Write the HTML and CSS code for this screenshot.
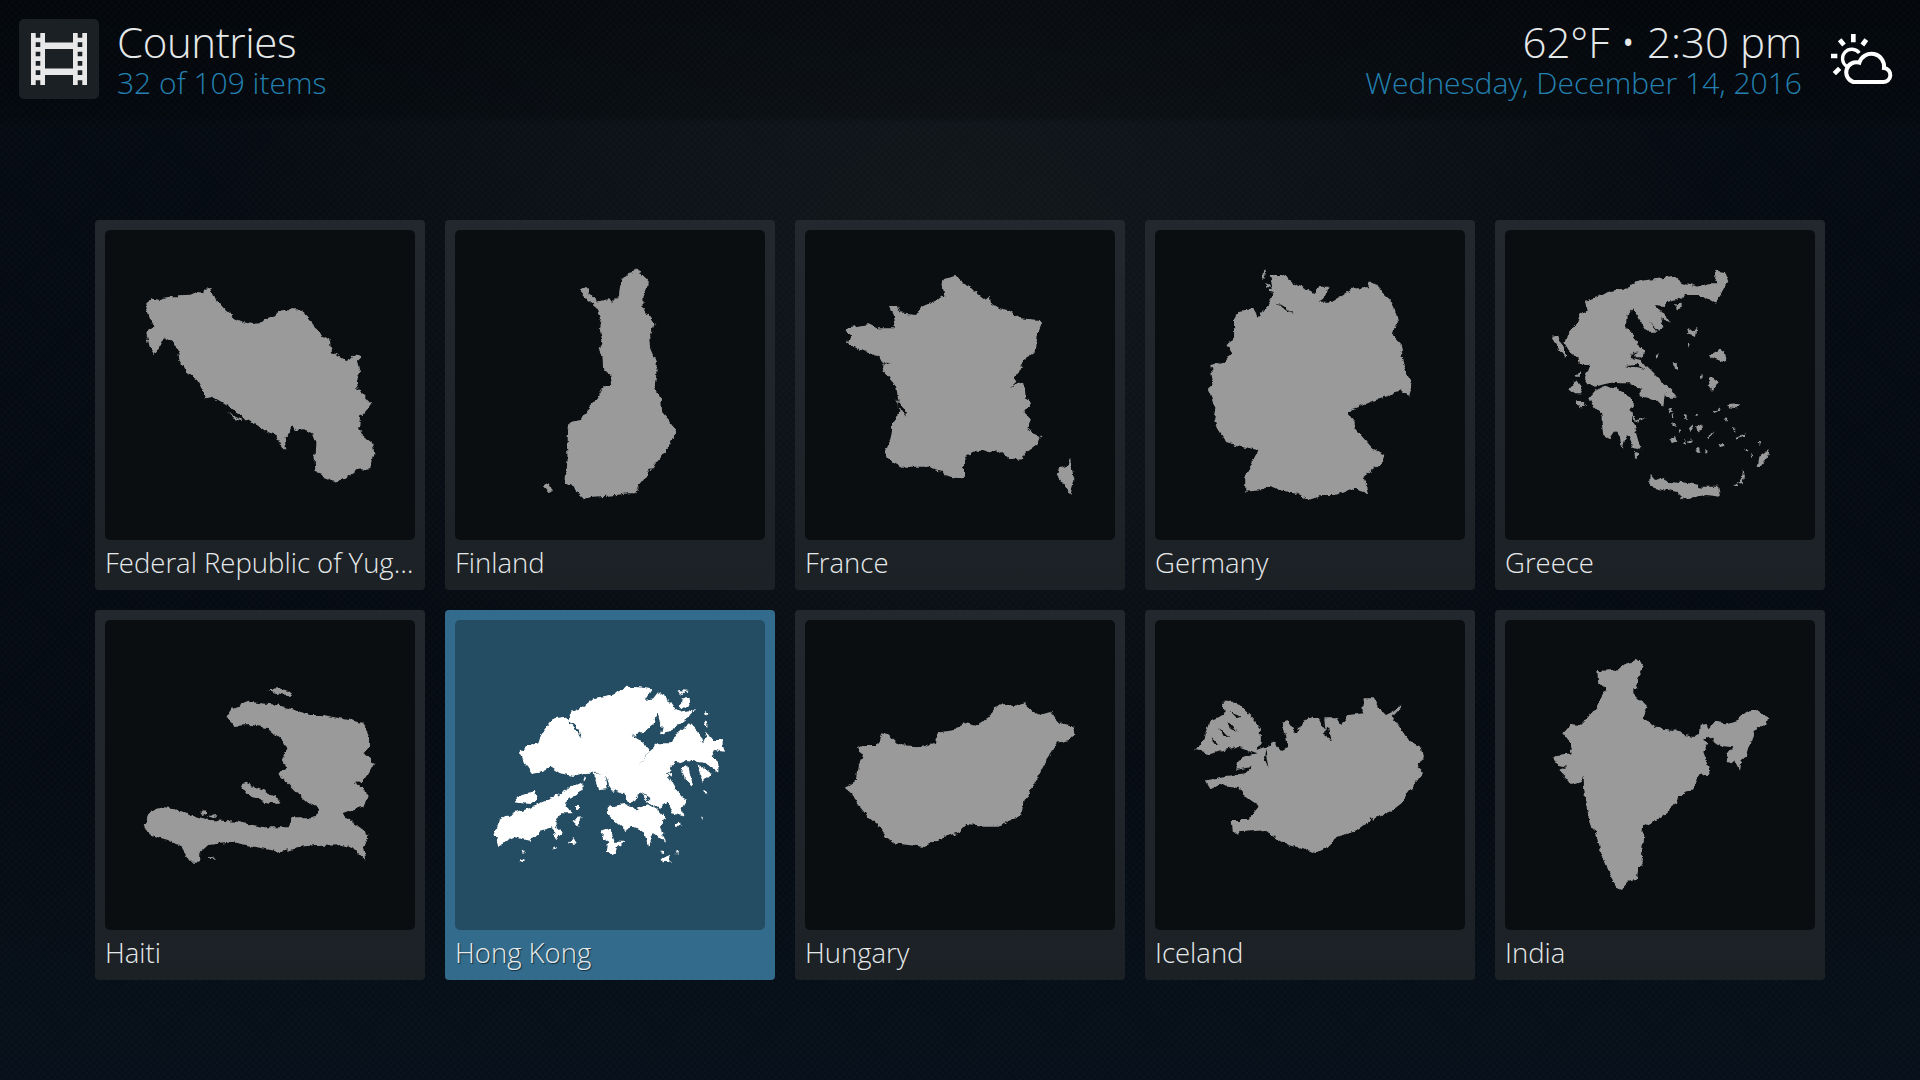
FILE: index.html
```html
<!DOCTYPE html>
<html lang="en">
<head>
    <meta charset="UTF-8">
    <meta name="viewport" content="width=device-width, initial-scale=1.0">
    <title>Countries</title>
    <link rel="stylesheet" href="styles.css">
</head>
<body>
    <!-- roughens the map outlines so they read as coastlines -->
    <svg class="defs" width="0" height="0">
        <filter id="coast" color-interpolation-filters="sRGB">
            <feTurbulence type="fractalNoise" baseFrequency="0.14" numOctaves="3" seed="4" result="noise"/>
            <feDisplacementMap in="SourceGraphic" in2="noise" scale="6" xChannelSelector="R" yChannelSelector="G"/>
        </filter>
    </svg>

    <header class="top-bar">
        <div class="top-left">
            <div class="section-icon">
                <svg class="film-icon" viewBox="0 0 56 52" width="56" height="52">
                    <path fill-rule="evenodd" d="M0 0H14V52H0Z M4.7 0V4.7H9.3V0Z M4.7 9.3V14H9.3V9.3Z M4.7 18.7V23.3H9.3V18.7Z M4.7 28V32.7H9.3V28Z M4.7 37.3V42H9.3V37.3Z M4.7 47.3V52H9.3V47.3Z"/>
                    <path fill-rule="evenodd" d="M42 0H56V52H42Z M46.7 0V4.7H51.3V0Z M46.7 9.3V14H51.3V9.3Z M46.7 18.7V23.3H51.3V18.7Z M46.7 28V32.7H51.3V28Z M46.7 37.3V42H51.3V37.3Z M46.7 47.3V52H51.3V47.3Z"/>
                    <path d="M14 9.5H42V16H14Z M14 35.5H42V42H14Z"/>
                </svg>
            </div>
            <div class="title-block">
                <div class="title">Countries</div>
                <div class="subtitle">32 of 109 items</div>
            </div>
        </div>
        <div class="top-right">
            <div class="clock-block">
                <div class="title">62°F • 2:30 pm</div>
                <div class="subtitle">Wednesday, December 14, 2016</div>
            </div>
            <svg class="weather-icon" viewBox="0 0 240 210" width="80" height="70">
                <path class="sun" d="M118 84A28 28 0 1 0 80 124"/>
                <path class="cloud" d="M100 171H188A21 21 0 0 0 192 129A38 38 0 0 0 118 113A29 29 0 0 0 100 171Z"/>
                <path class="rays" d="M100 27V52 M139 44L127 60 M59 44L72 60 M33 93H52 M43 146L59 130"/>
            </svg>
        </div>
    </header>

    <main class="grid">
        <div class="card">
            <div class="thumb">
                <svg class="map" filter="url(#coast)" viewBox="34 30 694 930" preserveAspectRatio="none">
                    <path d="M124 252L140 236 158 240 178 232 198 232 200 226 225 224 240 216 256 218 258 206 270 204 275 226 290 250 305 272 325 295 345 307 362 312 380 310 390 298 415 288 425 275 440 268 470 268 482 280 495 300 503 325 520 345 540 362 542 385 537 398 555 408 575 424 585 418 590 404 608 412 598 425 602 445 605 460 595 480 600 510 612 525 628 550 618 570 605 590 603 625 610 645 632 668 637 700 630 745 600 750 575 775 545 785 525 775 518 762 505 755 503 710 505 670 497 640 480 628 462 630 452 618 442 650 436 652 440 690 425 670 418 648 400 640 385 625 350 600 340 585 300 550 275 530 258 535 250 505 240 480 215 455 200 420 198 395 185 365 168 352 155 385 145 405 135 385 126 338 145 322 135 295 130 275Z M310 580L345 600 340 603 318 592Z"/>
                </svg>
            </div>
            <div class="label">Federal Republic of Yugoslavia</div>
        </div>
        <div class="card">
            <div class="thumb">
                <svg class="map" filter="url(#coast)" viewBox="818 30 694 930" preserveAspectRatio="none">
                    <path d="M1225 152L1240 162 1250 175 1248 205 1240 230 1240 262 1250 285 1265 315 1255 350 1257 385 1270 425 1268 470 1265 500 1272 520 1280 545 1282 580 1295 600 1313 630 1300 670 1280 710 1255 750 1240 780 1225 805 1222 820 1205 820 1180 825 1130 830 1105 838 1095 825 1085 800 1065 785 1070 720 1068 650 1075 605 1100 600 1112 570 1130 545 1145 510 1155 495 1170 495 1165 460 1150 450 1148 410 1140 395 1148 370 1140 330 1145 295 1135 262 1115 240 1097 212 1112 200 1120 222 1135 245 1160 238 1170 245 1185 225 1190 180 1205 160Z M1015 802L1030 790 1037 812 1028 820Z"/>
                </svg>
            </div>
            <div class="label">Finland</div>
        </div>
        <div class="card">
            <div class="thumb">
                <svg class="map" filter="url(#coast)" viewBox="34 30 694 930" preserveAspectRatio="none">
                    <path d="M370 165L378 182 395 190 412 212 425 225 440 240 448 230 450 248 470 265 490 272 515 295 560 300 565 310 552 350 548 400 530 412 515 450 505 480 495 505 510 485 525 490 528 530 540 550 525 575 540 600 532 625 545 640 562 648 555 670 530 695 520 718 495 720 470 692 450 698 428 688 400 705 390 725 390 770 365 775 345 768 340 755 300 740 250 740 230 725 220 715 212 695 225 660 232 610 245 575 243 540 238 500 220 470 205 450 210 430 195 405 160 390 130 370 135 350 122 325 150 318 175 312 195 325 235 325 230 280 222 258 240 258 245 280 285 285 295 260 330 240 345 225 342 190 350 172Z M238 538L254 560 260 590 250 572Z M204 420L228 430 210 428Z"/>
                    <path d="M630 712L632 750 637 780 628 825 615 795 600 770 605 745 625 735Z"/>
                </svg>
            </div>
            <div class="label">France</div>
        </div>
        <div class="card">
            <div class="thumb">
                <svg class="map" filter="url(#coast)" viewBox="818 30 694 930" preserveAspectRatio="none">
                    <path d="M1075 165L1100 165 1125 185 1150 205 1175 220 1185 200 1205 200 1200 225 1185 245 1215 245 1240 225 1262 205 1295 205 1298 185 1312 185 1325 215 1345 240 1355 265 1362 305 1350 345 1368 370 1375 425 1380 455 1392 490 1385 528 1370 510 1340 530 1300 545 1265 565 1250 578 1265 605 1265 625 1285 655 1305 685 1332 705 1325 730 1285 770 1295 820 1260 805 1220 825 1190 825 1160 838 1135 818 1105 812 1070 800 1060 810 1020 815 1020 770 1035 725 1050 690 1000 675 975 665 962 640 950 600 955 570 938 510 948 490 942 435 975 425 990 400 978 375 995 360 995 295 1005 272 1040 268 1050 290 1060 270 1070 255 1085 225Z M1085 250L1110 260 1130 285 1108 266Z"/>
                    <path d="M1060 150L1066 165 1058 185ZM1066 190L1078 196 1070 204ZM1074 206L1086 208 1080 218Z"/>
                </svg>
            </div>
            <div class="label">Germany</div>
        </div>
        <div class="card">
            <div class="thumb">
                <svg class="map" filter="url(#coast)" viewBox="45 30 930 930" preserveAspectRatio="none">
                    <path d="M680 152L705 157 715 185 705 195 690 225 675 248 650 235 620 225 590 225 560 240 535 245 525 258 495 255 505 270 525 280 545 310 525 300 510 295 520 320 505 335 490 320 475 305 500 335 475 335 460 315 440 285 430 265 410 285 408 320 430 345 440 375 465 395 455 410 445 395 430 395 425 415 455 420 470 440 495 465 520 490 545 510 560 530 535 530 525 520 520 560 500 540 470 530 445 525 455 510 420 490 395 490 365 488 345 492 315 500 295 490 285 475 300 435 270 430 262 410 240 395 225 370 235 340 260 315 270 285 290 270 285 245 320 235 355 215 390 208 415 205 425 190 470 180 515 175 555 170 580 190 620 200 655 190 685 190 672 170Z M405 438L440 435 470 450 440 445 420 442Z"/>
                    <path d="M298 535L320 510 345 497 380 508 420 530 432 555 420 575 445 600 475 592 445 606 425 590 434 625 447 670 454 688 430 680 415 645 405 655 398 690 390 650 375 630 358 655 340 645 335 610 335 585 310 560Z"/>
                    <path d="M482 765L495 780 520 770 530 785 580 790 640 800 685 800 690 830 650 825 620 830 575 838 565 820 520 810 480 800Z"/>
                    <path d="M800 740L805 710 836 687 830 715 810 742Z M750 790L757 742 762 770 758 790Z M730 795L745 785 745 795Z M660 405L690 388 705 400 712 428 690 422 665 415Z M595 330L622 325 618 348 598 342Z M655 475L675 472 680 490 668 512 660 495Z M665 578L692 562 688 572 670 580Z M712 552L748 550 740 565 715 562Z M183 350L205 347 210 365 225 385 225 410 205 385Z M238 505L258 480 272 500 272 520 255 520Z M255 470L270 450 270 470Z M258 540L272 540 288 560 272 562Z M432 695L445 700 443 718 435 715Z M555 250L575 248 575 265 560 268Z M430 400L450 395 455 412 435 412Z M548 430L560 432 566 450 552 446Z"/>
                    <path d="M535 568l10-8 4 14-8 6z M545 585l6-2 2 14-6 2z M597 625l10-10 4 14-10 6z M618 620l16-10 2 22-12 4z M565 628l6 2-2 8-6-2z M540 660l16-10 6 12-16 4z M594 662l14-8-2 10-10 6z M615 685l12 0 4 10-14 0z M645 692l10-2 0 6-8 2z M648 650l22-14-4 8-14 10z M686 672l12-4 2 10-10 4z M738 652l30-14-6 10-22 8z M728 620l12 14-4 2-10-12z M706 592l6 2-2 10-4 0z M768 685l8 4-4 6-6-4z M802 665l8 4-4 8-6-6z M782 706l10 2-4 6z M580 664l8 2-2 6-8-2z M550 610l8 2-2 10-6-2z M585 582l8 2 0 12-8 0z M505 402l8 2-12 12-4-4z M590 372l6 0-2 8z M630 468l8-2 0 8-8-2z M615 580l12 4-8 4z"/>
                </svg>
            </div>
            <div class="label">Greece</div>
        </div>

        <div class="card">
            <div class="thumb">
                <svg class="map" filter="url(#coast)" viewBox="34 60 694 930" preserveAspectRatio="none">
                    <path d="M320 325L355 305 385 310 420 315 460 330 490 345 520 345 560 355 612 368 625 410 625 445 615 460 630 478 637 490 625 520 612 545 590 550 610 560 622 585 612 620 585 630 565 640 590 670 625 705 612 745 617 780 590 745 560 733 510 735 470 740 420 755 370 740 320 727 265 735 245 760 245 785 225 785 205 740 175 720 135 705 123 675 135 632 165 622 190 625 225 645 270 660 330 665 390 682 445 682 455 652 505 652 512 625 490 610 465 580 440 545 422 520 440 505 430 480 440 445 430 420 400 385 360 375 320 378 308 350Z"/>
                    <path d="M395 268L420 265 445 272 458 288 425 282Z M338 555L350 548 375 565 410 585 425 600 422 612 390 605 355 585Z M245 635L258 630 265 640 252 648Z M265 648L288 645 280 655Z M262 770L285 775 270 778Z"/>
                </svg>
            </div>
            <div class="label">Haiti</div>
        </div>
        <div class="card selected">
            <div class="thumb">
                <svg class="map" filter="url(#coast)" viewBox="45 60 930 930" preserveAspectRatio="none">
                    <path d="M555 260L600 262 635 268 615 300 640 295 655 275 680 290 700 320 720 335 765 328 745 350 700 385 660 405 665 380 655 360 650 338 640 375 610 395 575 405 600 420 625 445 620 465 592 500 630 450 655 430 695 430 705 405 750 370 775 395 790 430 800 395 820 420 845 420 855 455 825 450 815 470 835 490 835 515 800 490 770 485 745 480 720 490 705 480 690 510 675 520 690 535 710 570 725 590 740 600 725 625 730 650 700 640 685 605 655 625 620 600 600 580 585 600 565 610 550 580 510 565 495 520 455 518 430 520 400 528 360 520 330 500 300 515 275 518 255 490 240 458 255 440 295 430 305 400 340 355 365 352 385 362 395 335 430 320 460 295 510 285 545 270Z M385 365L405 375 430 415 400 385Z M605 578L635 600 625 600Z"/>
                    <path d="M427 545L428 570 385 595 380 620 395 640 365 640 345 680 370 700 350 718 335 685 300 695 270 722 225 712 175 738 165 700 180 660 225 635 270 622 345 590 395 560Z"/>
                    <path d="M230 590L285 573 290 600 270 612 232 608Z M458 522L495 518 503 565 475 568Z M505 620L555 612 590 628 625 612 655 630 675 655 660 680 675 725 640 700 625 740 610 690 575 680 555 690 525 665 500 640Z M490 690L510 685 525 725 555 725 530 745 525 765 500 755 505 725 485 715Z"/>
                    <path d="M395 660L425 655 415 680Z M385 735L400 710 408 730Z M340 735L350 750 340 748Z M405 618l12 0 0 10-12-2z M238 785L255 775 250 790Z M245 755L258 760 248 765Z M665 775L690 765 692 785 668 787Z M658 755L672 755 672 762Z M705 755L712 752 708 765Z M705 670L720 665 722 680 705 680Z M715 270L740 272 730 282Z M725 295L750 295 745 315 722 330Z M795 335L805 340 800 350Z M795 360L805 365 805 380 797 375Z M725 505L745 500 760 560 735 540Z M770 490L815 520 790 545Z M680 520L695 515 692 530Z M785 572L800 570 808 590Z M510 565L535 572 520 578Z M430 532L438 535 432 545Z M783 650l6 0-2 14z"/>
                </svg>
            </div>
            <div class="label">Hong Kong</div>
        </div>
        <div class="card">
            <div class="thumb">
                <svg class="map" filter="url(#coast)" viewBox="34 60 694 930" preserveAspectRatio="none">
                    <path d="M460 320L480 312 500 318 525 310 545 335 560 345 585 335 595 355 615 375 635 380 637 400 625 420 600 428 585 460 570 490 555 530 540 570 525 605 520 650 490 660 470 680 435 680 395 675 380 695 340 715 300 740 265 735 235 730 215 710 200 680 175 650 150 610 140 580 123 565 150 540 155 490 165 460 150 445 165 435 195 435 205 400 220 405 245 435 300 440 325 428 330 395 380 385 390 365 420 375 445 355Z"/>
                </svg>
            </div>
            <div class="label">Hungary</div>
        </div>
        <div class="card">
            <div class="thumb">
                <svg class="map" filter="url(#coast)" viewBox="818 60 694 930" preserveAspectRatio="none">
                    <path d="M1285 295L1305 295 1320 325 1335 345 1350 335 1360 320 1370 320 1350 350 1365 380 1385 420 1415 440 1420 470 1405 500 1420 520 1405 545 1385 580 1370 610 1345 635 1300 660 1265 695 1225 710 1205 740 1175 760 1150 745 1115 735 1090 715 1065 690 992 698 990 660 1025 660 1050 620 1020 590 1005 560 960 555 940 568 930 545 965 530 1020 520 1035 500 1000 510 1005 480 1030 465 1045 460 1005 440 940 460 908 450 925 420 940 365 975 345 970 305 1000 305 1015 325 1040 360 1055 385 1055 425 1045 450 1065 440 1085 425 1100 450 1115 440 1100 365 1115 360 1135 400 1145 365 1170 350 1185 355 1200 395 1197 355 1225 355 1235 375 1250 345 1285 340Z M980 360L1005 395 985 385Z M962 385L985 415 968 405Z M945 415L960 435 948 430Z M985 335L1010 350 1000 355Z M1205 380L1212 430 1198 400Z M1065 450L1072 500 1062 470Z"/>
                </svg>
            </div>
            <div class="label">Iceland</div>
        </div>
        <div class="card">
            <div class="thumb">
                <svg class="map" filter="url(#coast)" viewBox="45 60 930 930" preserveAspectRatio="none">
                    <path d="M440 180L462 190 455 215 442 235 440 250 445 265 430 265 430 280 445 295 472 322 460 350 480 372 505 385 550 390 580 402 610 408 630 405 632 375 650 372 655 385 675 365 710 370 740 360 770 335 805 330 815 345 835 355 828 380 805 378 790 400 780 435 770 470 755 480 750 512 735 480 725 490 710 485 712 465 730 442 695 438 675 430 660 412 645 408 640 420 658 430 640 455 652 490 660 525 640 525 625 530 610 565 575 585 550 620 510 650 480 670 462 680 458 730 455 790 445 810 440 840 415 845 395 868 378 860 355 820 335 765 320 710 300 670 285 600 280 525 275 545 245 555 230 535 205 510 232 500 205 495 188 475 200 465 248 460 240 425 220 400 245 372 270 375 295 350 320 320 340 275 350 270 325 255 322 210 345 212 385 208 405 192Z"/>
                </svg>
            </div>
            <div class="label">India</div>
        </div>
    </main>
</body>
</html>
```
FILE: styles.css
```css
html, body {
    margin: 0;
    padding: 0;
    height: 100%;
}
body {
    width: 1920px;
    height: 1080px;
    overflow: hidden;
    font-family: "Open Sans", "Noto Sans", sans-serif;
    font-weight: 300;
    color: #e6e9ea;
    background-color: #050b12;
    background-image:
        repeating-linear-gradient(45deg, rgba(255,255,255,0.006) 0 2px, transparent 2px 5px),
        repeating-linear-gradient(-45deg, rgba(255,255,255,0.006) 0 2px, transparent 2px 5px),
        linear-gradient(to bottom, rgba(0,0,0,0.35) 0, rgba(0,0,0,0.22) 116px, transparent 124px),
        radial-gradient(ellipse 760px 560px at 50% 22%, #12171b 0%, #0b1117 55%, transparent 100%),
        linear-gradient(to top, #07101a 0, transparent 30%);
}
.defs {
    position: absolute;
}

/* top bar */
.top-bar {
    height: 120px;
    display: flex;
    justify-content: space-between;
    box-sizing: border-box;
}
.top-left, .top-right {
    display: flex;
}
.top-left {
    padding: 19px 0 0 19px;
}
.section-icon {
    width: 80px;
    height: 80px;
    background-color: #1b2025;
    border-radius: 5px;
    display: flex;
    align-items: center;
    justify-content: center;
}
.film-icon {
    fill: #e8e8e8;
}
.title-block {
    margin-left: 18px;
}
.title-block .title {
    letter-spacing: -0.4px;
}
.clock-block {
    text-align: right;
    margin-top: 19px;
    margin-right: 18px;
}
.title {
    font-size: 42px;
    line-height: 47px;
    margin-top: -1px;
    white-space: nowrap;
}
.subtitle {
    font-size: 30px;
    line-height: 36px;
    color: #2380b0;
    white-space: nowrap;
}
.weather-icon {
    margin: 25px 20px 0 0;
    fill: none;
    stroke: #fff;
}
.weather-icon .sun {
    stroke-width: 10;
}
.weather-icon .cloud {
    stroke-width: 12;
}
.weather-icon .rays {
    stroke-width: 14;
}

/* grid of countries */
.grid {
    margin: 100px 0 0 95px;
    display: grid;
    grid-template-columns: repeat(5, 330px);
    grid-auto-rows: 370px;
    gap: 20px;
}
.card {
    box-sizing: border-box;
    padding: 10px;
    border-radius: 4px;
    background: linear-gradient(to bottom, #22282e, #1c2126);
}
.thumb {
    height: 310px;
    border-radius: 5px;
    background-color: #0b0e10;
}
.map {
    display: block;
    width: 100%;
    height: 100%;
    fill: #9a9a9a;
    fill-rule: evenodd;
}
.label {
    font-size: 27.5px;
    line-height: 40px;
    margin-top: 3px;
    white-space: nowrap;
    overflow: hidden;
    text-overflow: ellipsis;
}
.card.selected {
    background: #336b8c;
}
.card.selected .thumb {
    background-color: #244c62;
}
.card.selected .map {
    fill: #fff;
}
.card.selected .label {
    text-shadow: 1px 1px 1px #10303f;
}
```
